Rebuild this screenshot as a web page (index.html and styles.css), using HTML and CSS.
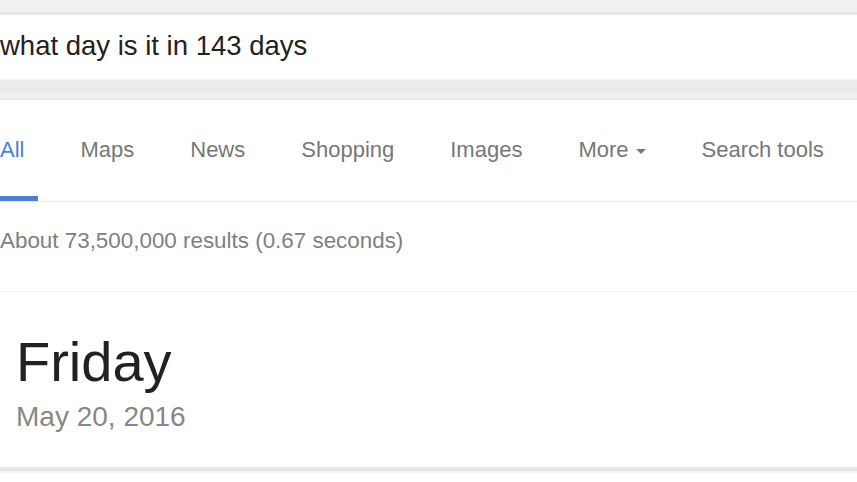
FILE: index.html
```html
<!DOCTYPE html>
<html>
<head>
<meta charset="utf-8">
<link rel="stylesheet" href="styles.css">
</head>
<body>
<div class="topband"></div>
<div class="searchbox"><span class="query">what day is it in 143 days</span></div>
<div class="gapband"></div>
<nav class="tabs">
  <div class="tab active">All</div>
  <div class="tab">Maps</div>
  <div class="tab">News</div>
  <div class="tab">Shopping</div>
  <div class="tab">Images</div>
  <div class="tab">More <span class="caret"></span></div>
  <div class="tab">Search tools</div>
</nav>
<div class="stats">About 73,500,000 results (0.67 seconds)</div>
<section class="answer">
  <div class="day">Friday</div>
  <div class="date">May 20, 2016</div>
</section>
<div class="bottomband"></div>
</body>
</html>
```
FILE: styles.css
```css
html, body {
  margin: 0;
  padding: 0;
  background: #ffffff;
  font-family: "Liberation Sans", Arial, sans-serif;
  overflow: hidden;
}
.topband {
  height: 12px;
  background: #f1f1f1;
  border-bottom: 3px solid #e7e7e7;
}
.searchbox {
  height: 64px;
  display: flex;
  align-items: center;
  background: #ffffff;
}
.query {
  margin-top: -2px;
  font-size: 27.5px;
  color: #222222;
}
.gapband {
  height: 21px;
  box-sizing: border-box;
  background: linear-gradient(#f4f4f4 0, #ebebeb 2px, #ebebeb 10px, #e4e4e4 11px, #efefef 12px, #f2f2f2 19px, #e6e6e6 20px);
}
.tabs {
  height: 102px;
  display: flex;
  align-items: stretch;
  gap: 28px;
  margin-left: -14px;
  border-bottom: 1px solid #e6e6e6;
  box-sizing: border-box;
}
.tab {
  padding: 0 14px;
  display: flex;
  align-items: center;
  font-size: 22px;
  color: #777777;
  box-sizing: border-box;
  border-bottom: 5px solid transparent;
  padding-top: 3px;
}
.tab.active {
  color: #4a7fdc;
  border-bottom-color: #4d7fd6;
}
.caret {
  display: inline-block;
  width: 0;
  height: 0;
  margin-left: 7px;
  margin-top: 3px;
  border-left: 5px solid transparent;
  border-right: 5px solid transparent;
  border-top: 5px solid #777777;
}
.stats {
  height: 90px;
  box-sizing: border-box;
  display: flex;
  align-items: center;
  padding-bottom: 12px;
  font-size: 22.4px;
  color: #808080;
  border-bottom: 1px solid #f3f3f3;
}
.answer {
  height: 175px;
  box-sizing: border-box;
  padding: 38px 0 0 17px;
}
.day {
  font-size: 56px;
  line-height: 64px;
  color: #222222;
  margin-left: -1px;
}
.date {
  font-size: 28px;
  line-height: 32px;
  color: #878787;
  margin-top: 7px;
  margin-left: -1px;
}
.bottomband {
  height: 4px;
  background: #e6e6e6;
  border-bottom: 2px solid #f3f3f3;
}
```
